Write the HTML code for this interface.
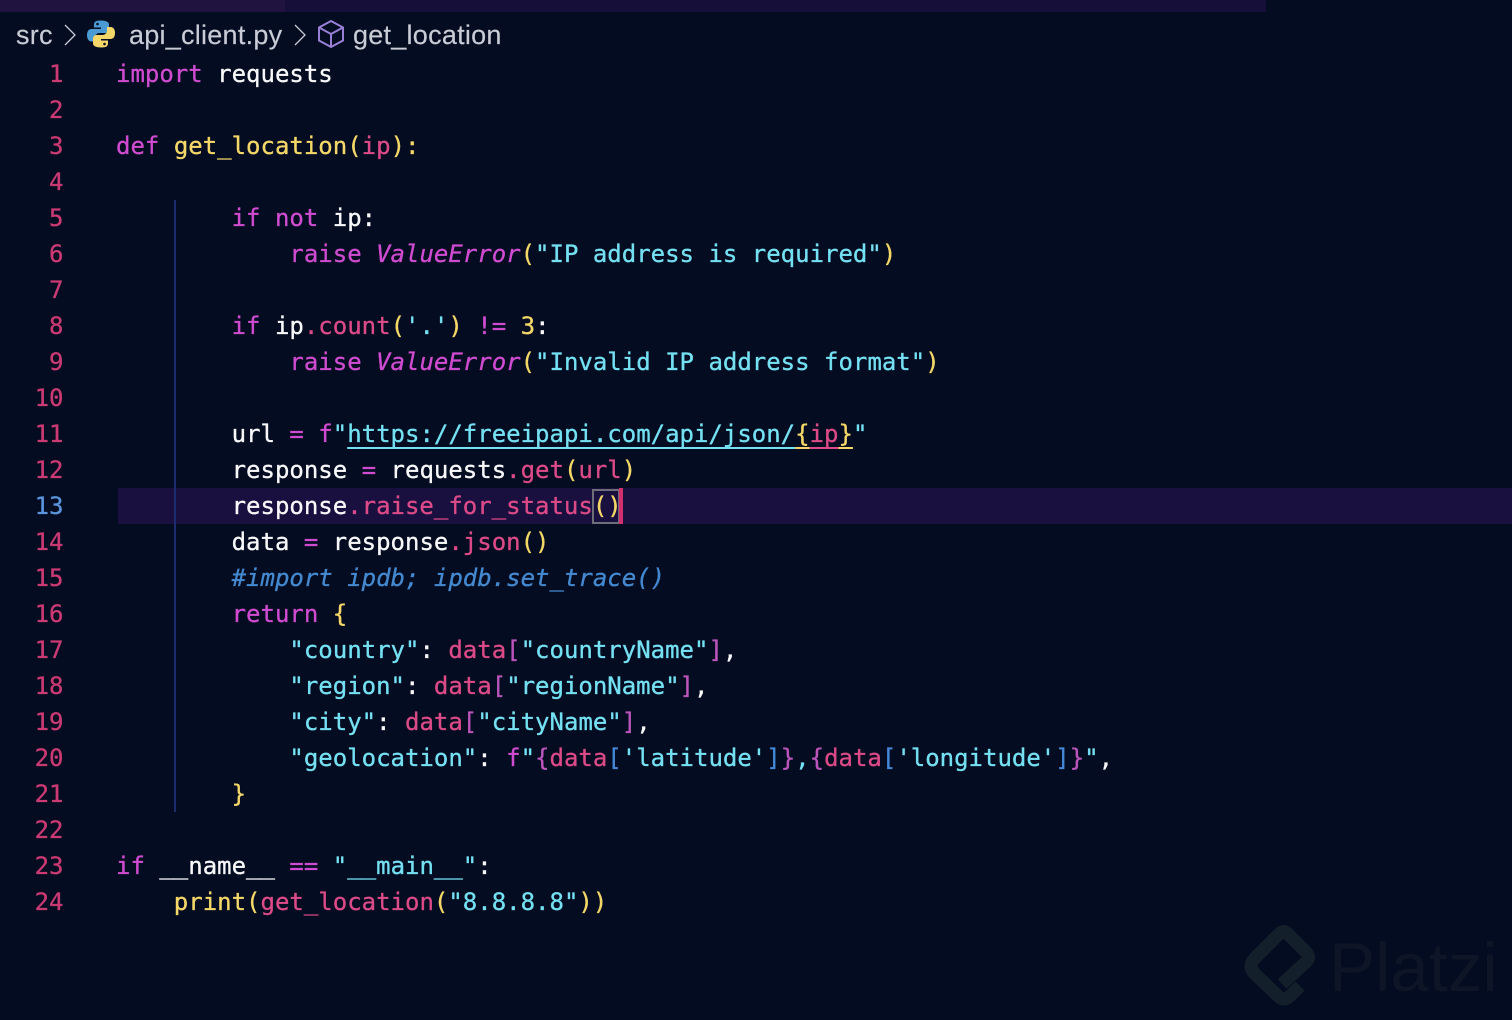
<!DOCTYPE html>
<html><head><meta charset="utf-8">
<style>
html,body{margin:0;padding:0;width:1512px;height:1020px;overflow:hidden;background:#030c20;}
.a{position:absolute}
.l,.n{position:absolute;font-family:"DejaVu Sans Mono","Liberation Mono",monospace;font-size:24px;line-height:36px;height:36px;white-space:pre;-webkit-text-stroke:.3px currentColor;}
.l{left:116px;color:#f8f8fa}
.n{left:0;width:63.5px;text-align:right;color:#cc3a74}
.k{color:#cf4bcf}.f{color:#f4d768}.p{color:#dc4a88}.s{color:#74e0f2}.o{color:#cf4bcf}.c{color:#4489d0;font-style:italic}
.i{color:#cf4bcf;font-style:italic}.b{color:#4489d8}.v{color:#bb55bb}.y{color:#f4d768}
.u{text-decoration:underline;text-underline-offset:5px;text-decoration-thickness:2px;text-decoration-skip-ink:none}
.bc{position:absolute;font-family:"Liberation Sans",sans-serif;font-size:27px;letter-spacing:.25px;line-height:36px;top:17px;color:#c9cbd6;white-space:pre;-webkit-text-stroke:.15px currentColor;}
</style></head><body>
<div class="a" style="left:0;top:0;width:285px;height:12px;background:#20133f"></div>
<div class="a" style="left:285px;top:0;width:981px;height:12px;background:#160f3a"></div>
<div class="bc" style="left:16px">src</div>
<svg class="a" style="left:62px;top:23px" width="16" height="24" fill="none" stroke="#c9cbd6" stroke-width="1.3"><path d="M3 2L13 12L3 22"/></svg>
<svg class="a" style="left:86px;top:19px" width="30" height="30" viewBox="0 0 30 30">
<path d="M14.500 1.500c-5 0-6.500 1.500-6.500 4v3h7v1.500H5.500c-3 0-4.500 2.500-4.500 6s1.500 6.500 4.500 6.500H9v-4c0-2.500 2-4.500 4.500-4.500h6c2 0 3.500-1.500 3.500-3.500V5.500c0-2.500-3-4-8.500-4z" fill="#4a9ad4"/>
<path d="M15.500 28.500c5 0 6.500-1.500 6.500-4v-3h-7V20h9.500c3 0 4.500-2.500 4.500-6s-1.500-6-4.500-6H21v3.500c0 2.500-2 4.500-4.500 4.500h-6C8.500 16 7 17.500 7 19.500v5c0 2.500 3 4 8.500 4z" fill="#f5d76a"/>
<circle cx="11.500" cy="5" r="1.300" fill="#030c20"/><circle cx="18.500" cy="25" r="1.300" fill="#030c20"/></svg>
<div class="bc" style="left:129px">api_client.py</div>
<svg class="a" style="left:292px;top:23px" width="16" height="24" fill="none" stroke="#c9cbd6" stroke-width="1.3"><path d="M3 2L13 12L3 22"/></svg>
<svg class="a" style="left:316px;top:19px" width="30" height="30" viewBox="0 0 30 30" fill="none" stroke="#9a7fd6" stroke-width="2"><path d="M15 2L27 8.500V21.500L15 28L3 21.500V8.500Z"/><path d="M3 8.500L15 15L27 8.500M15 15V28"/></svg>
<div class="bc" style="left:353px">get_location</div>

<div class="a" style="left:118px;top:488px;width:1394px;height:36px;background:#1a1040"></div>
<div class="a" style="left:174px;top:200px;width:2px;height:612px;background:#1b2d6e"></div>
<div class="a" style="left:592px;top:489px;width:24px;height:31px;border:2px solid #6e6e78"></div>
<div class="a" style="left:619px;top:488px;width:4px;height:36px;background:#d2306c"></div>

<div class="n" style="top:56px">1</div><div class="l" style="top:56px"><span class="k">import</span> requests</div>
<div class="n" style="top:92px">2</div>
<div class="n" style="top:128px">3</div><div class="l" style="top:128px"><span class="k">def</span> <span class="f">get_location(</span><span class="p">ip</span><span class="f">):</span></div>
<div class="n" style="top:164px">4</div>
<div class="n" style="top:200px">5</div><div class="l" style="top:200px">        <span class="k">if not</span> ip:</div>
<div class="n" style="top:236px">6</div><div class="l" style="top:236px">            <span class="k">raise</span> <span class="i">ValueError</span><span class="y">(</span><span class="s">"IP address is required"</span><span class="y">)</span></div>
<div class="n" style="top:272px">7</div>
<div class="n" style="top:308px">8</div><div class="l" style="top:308px">        <span class="k">if</span> ip<span class="p">.count</span><span class="y">(</span><span class="s">'.'</span><span class="y">)</span> <span class="o">!=</span> <span class="y">3</span>:</div>
<div class="n" style="top:344px">9</div><div class="l" style="top:344px">            <span class="k">raise</span> <span class="i">ValueError</span><span class="y">(</span><span class="s">"Invalid IP address format"</span><span class="y">)</span></div>
<div class="n" style="top:380px">10</div>
<div class="n" style="top:416px">11</div><div class="l" style="top:416px">        url <span class="o">=</span> <span class="k">f</span><span class="s">"<span class="u">https://freeipapi.com/api/json/</span></span><span class="y u">{</span><span class="p u">ip</span><span class="y u">}</span><span class="s">"</span></div>
<div class="n" style="top:452px">12</div><div class="l" style="top:452px">        response <span class="o">=</span> requests<span class="p">.get</span><span class="y">(</span><span class="p">url</span><span class="y">)</span></div>
<div class="n" style="top:488px;color:#5a94dc">13</div><div class="l" style="top:488px">        response<span class="p">.raise_for_status</span><span class="y">()</span></div>
<div class="n" style="top:524px">14</div><div class="l" style="top:524px">        data <span class="o">=</span> response<span class="p">.json</span><span class="y">()</span></div>
<div class="n" style="top:560px">15</div><div class="l" style="top:560px">        <span class="c">#import ipdb; ipdb.set_trace()</span></div>
<div class="n" style="top:596px">16</div><div class="l" style="top:596px">        <span class="k">return</span> <span class="y">{</span></div>
<div class="n" style="top:632px">17</div><div class="l" style="top:632px">            <span class="s">"country"</span>: <span class="p">data</span><span class="v">[</span><span class="s">"countryName"</span><span class="v">]</span>,</div>
<div class="n" style="top:668px">18</div><div class="l" style="top:668px">            <span class="s">"region"</span>: <span class="p">data</span><span class="v">[</span><span class="s">"regionName"</span><span class="v">]</span>,</div>
<div class="n" style="top:704px">19</div><div class="l" style="top:704px">            <span class="s">"city"</span>: <span class="p">data</span><span class="v">[</span><span class="s">"cityName"</span><span class="v">]</span>,</div>
<div class="n" style="top:740px">20</div><div class="l" style="top:740px">            <span class="s">"geolocation"</span>: <span class="k">f</span><span class="s">"</span><span class="v">{</span><span class="p">data</span><span class="b">[</span><span class="s">'latitude'</span><span class="b">]</span><span class="v">}</span><span class="s">,</span><span class="v">{</span><span class="p">data</span><span class="b">[</span><span class="s">'longitude'</span><span class="b">]</span><span class="v">}</span><span class="s">"</span>,</div>
<div class="n" style="top:776px">21</div><div class="l" style="top:776px">        <span class="y">}</span></div>
<div class="n" style="top:812px">22</div>
<div class="n" style="top:848px">23</div><div class="l" style="top:848px"><span class="k">if</span> __name__ <span class="o">==</span> <span class="s">"__main__"</span>:</div>
<div class="n" style="top:884px">24</div><div class="l" style="top:884px">    <span class="f">print(</span><span class="p">get_location</span><span class="y">(</span><span class="s">"8.8.8.8"</span><span class="y">))</span></div>

<svg class="a" style="left:1240px;top:920px" width="80" height="92" viewBox="0 0 80 92" fill="none" stroke="#131f2a" stroke-width="13" stroke-linejoin="round"><path d="M42 64L66 42Q71 37 66 32L48 14Q44 9 39 14L14 39Q8 46 14 53L38 76Q44 82 50 76L60 66"/></svg>
<div class="a" style="left:1329px;top:932px;font-family:'Liberation Sans',sans-serif;font-size:69px;line-height:72px;color:#0d1527;white-space:pre">Platzi</div>
</body></html>
